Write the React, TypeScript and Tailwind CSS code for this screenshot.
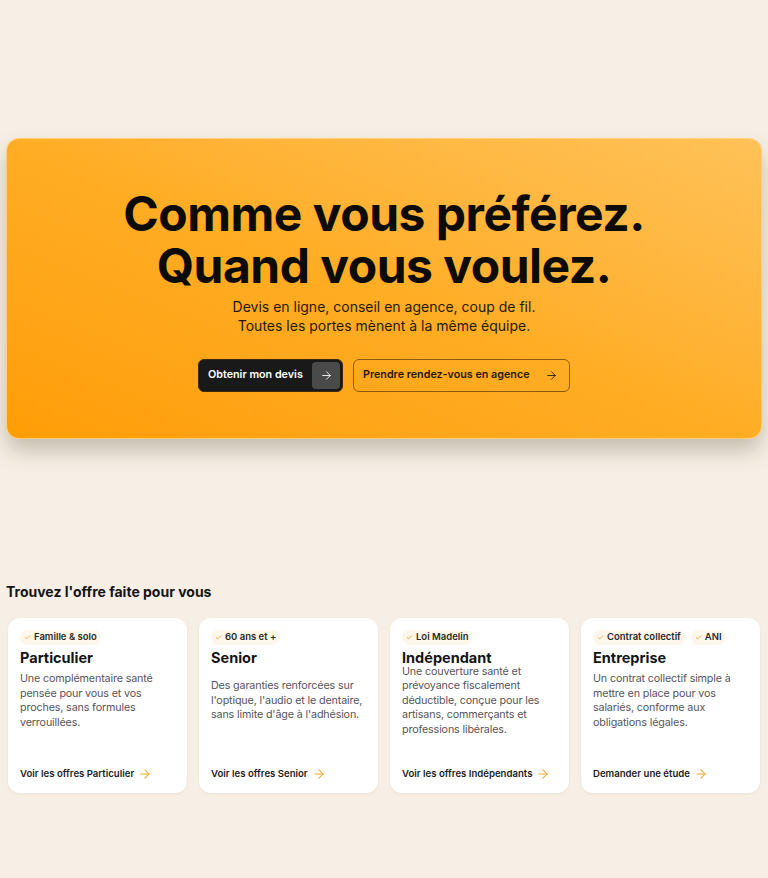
import { ArrowRight, Check } from "lucide-react";

const offers = [
    {
        tags: ["Famille & solo"],
        title: "Particulier",
        text: "Une complémentaire santé pensée pour vous et vos proches, sans formules verrouillées.",
        link: "Voir les offres Particulier",
    },
    {
        tags: ["60 ans et +"],
        title: "Senior",
        text: "Des garanties renforcées sur l'optique, l'audio et le dentaire, sans limite d'âge à l'adhésion.",
        link: "Voir les offres Senior",
    },
    {
        tags: ["Loi Madelin"],
        title: "Indépendant",
        text: "Une couverture santé et prévoyance fiscalement déductible, conçue pour les artisans, commerçants et professions libérales.",
        link: "Voir les offres Indépendants",
    },
    {
        tags: ["Contrat collectif", "ANI"],
        title: "Entreprise",
        text: "Un contrat collectif simple à mettre en place pour vos salariés, conforme aux obligations légales.",
        link: "Demander une étude",
    },
];

export default function App() {
    return (
        <div className="min-h-[878px] bg-[#f7efe5] font-['Inter',sans-serif] text-[#141414] px-[7px] pt-[139px] pb-10">
            {/* Hero */}
            <section className="rounded-[12px] bg-gradient-to-tr from-[#ff9d05] via-[#ffad24] to-[#ffc257] ring-1 ring-[#ffcf7a] shadow-[0_12px_22px_rgba(60,50,30,0.28)] pt-[49px] pb-[46px] flex flex-col items-center">
                <h1 className="text-[48px] leading-[52px] font-bold tracking-[-0.5px] text-center text-[#0d0b08]">
                    Comme vous préférez.
                    <br />
                    Quand vous voulez.
                </h1>
                <p className="mt-[5px] text-[14px] leading-[19px] text-center text-[#24190a]">
                    Devis en ligne, conseil en agence, coup de fil.
                    <br />
                    Toutes les portes mènent à la même équipe.
                </p>
                <div className="mt-[24px] flex items-center gap-[10px]">
                    <button className="h-[33px] w-[145px] flex items-center justify-between rounded-[6px] bg-[#191919] border border-[#3a2a10] pl-[9px] pr-[2px] text-white text-[10.75px] font-semibold">
                        Obtenir mon devis
                        <span className="w-[28px] h-[27px] rounded-[4px] bg-[#4a4a4a] flex items-center justify-center">
                            <ArrowRight size={13} strokeWidth={1.6} />
                        </span>
                    </button>
                    <button className="h-[33px] w-[217px] flex items-center justify-between rounded-[6px] border border-[#8a5a10] pl-[9px] pr-[11px] text-[#22180a] text-[10.75px] font-semibold">
                        Prendre rendez-vous en agence
                        <ArrowRight size={13} strokeWidth={1.6} />
                    </button>
                </div>
            </section>

            {/* Offers */}
            <h2 className="mt-[144px] text-[14px] leading-[20px] font-bold text-[#141414] -ml-px">
                Trouvez l'offre faite pour vous
            </h2>
            <div className="mt-[16px] grid grid-cols-4 gap-[12px] px-px">
                {offers.map((o) => (
                    <div
                        key={o.title}
                        className="h-[175px] rounded-[12px] bg-white shadow-[0_1px_3px_rgba(120,90,40,0.08)] px-[12px] pt-[12px] pb-[12px] flex flex-col"
                    >
                        <div className="flex gap-[6px]">
                            {o.tags.map((t) => (
                                <span
                                    key={t}
                                    className="h-[15px] inline-flex items-center gap-[3px] rounded-full bg-[#fdf6ea] px-[4px] text-[9.5px] font-semibold text-[#2b2b2b]"
                                >
                                    <Check size={7} strokeWidth={3} className="text-[#f2a533]" />
                                    {t}
                                </span>
                            ))}
                        </div>
                        <h3 className="mt-[3px] text-[14.5px] leading-[20px] font-bold text-[#141414]">
                            {o.title}
                        </h3>
                        <div className="h-[66px] flex items-center">
                            <p className="text-[10.75px] leading-[14.5px] tracking-[-0.15px] text-[#58555a]">
                                {o.text}
                            </p>
                        </div>
                        <div className="flex-1" />
                        <a className="flex items-center gap-[4px] text-[9.6px] leading-[15px] font-semibold text-[#1c1c1c]">
                            {o.link}
                            <ArrowRight size={14} strokeWidth={1.8} className="text-[#f3a623]" />
                        </a>
                    </div>
                ))}
            </div>
        </div>
    );
}
